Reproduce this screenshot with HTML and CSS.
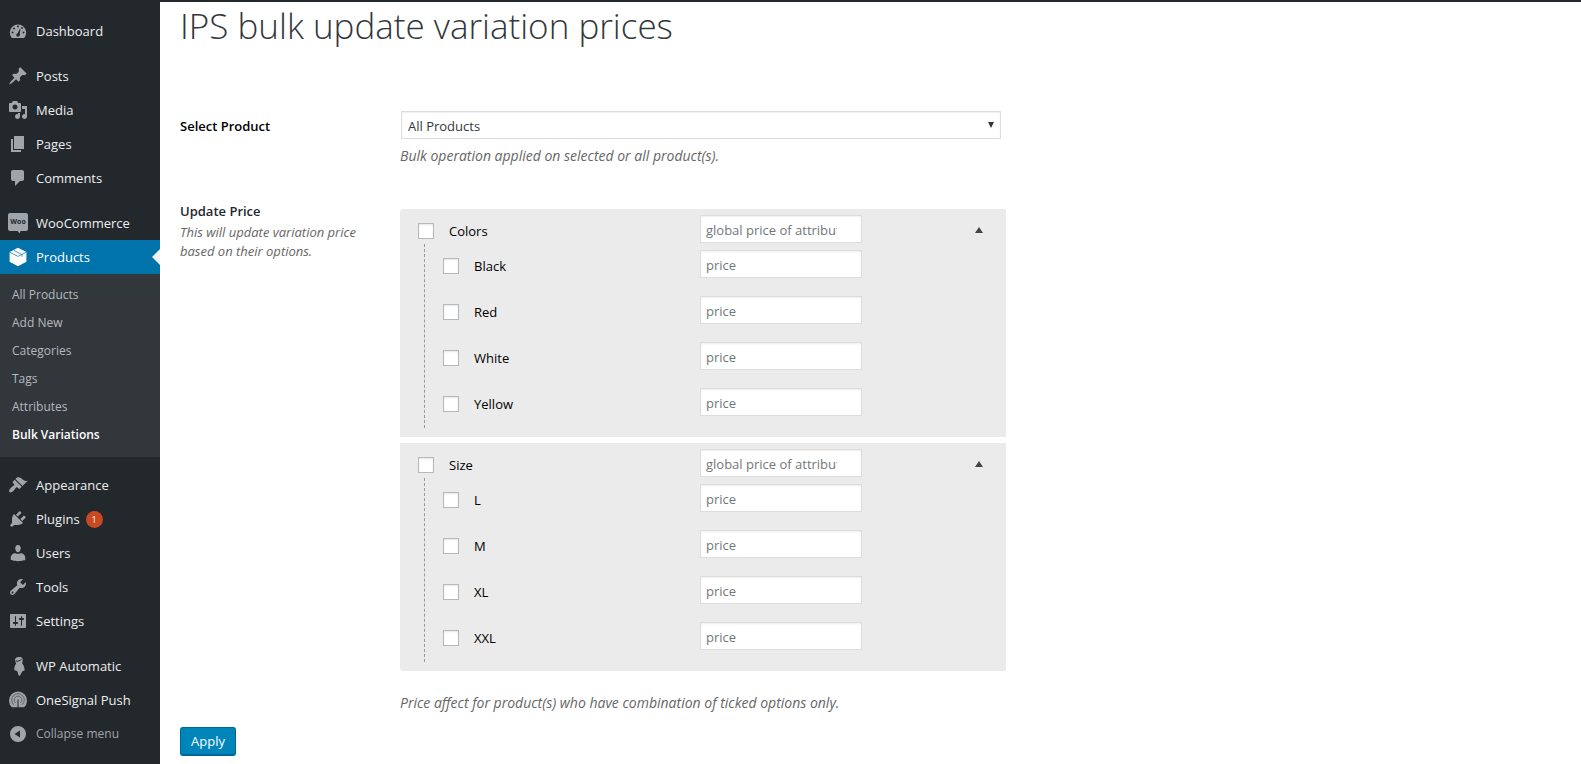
FILE: index.html
```html
<!DOCTYPE html>
<html lang="en">
<head>
<meta charset="utf-8">
<title>IPS bulk update variation prices</title>
<link rel="stylesheet" href="styles.css">
</head>
<body>
<div class="toolbar"></div>
<div class="layout">
  <nav class="menu" aria-label="Main menu">
    <ul class="menu-list">
      <li><a class="menu-item" href="#"><svg class="icon" viewBox="0 0 20 20"><path d="M3.760 17h12.480A8.200 8.200 0 1 0 3.760 17z"/><g class="icon-dots"><circle cx="10" cy="5.500" r="1"/><circle cx="6" cy="7.500" r="1"/><circle cx="14" cy="7" r="1"/><circle cx="4.500" cy="11.500" r="1"/><circle cx="15.500" cy="11.500" r="1"/><circle cx="10" cy="14" r="1.800"/><path d="M9.300 13L11.800 8l.7.300-1 5.700z"/></g></svg>Dashboard</a></li>
      <li class="spaced"><a class="menu-item" href="#"><svg class="icon" viewBox="0 0 20 20"><path d="M10.440 3.020l1.820-1.820 6.360 6.350-1.830 1.820c-1.050-.68-2.480-.57-3.410.36l-.75.75c-.92.93-1.040 2.350-.35 3.410l-1.830 1.820-2.410-2.410-2.800 2.790c-.42.42-3.380 2.710-3.800 2.290s1.860-3.390 2.280-3.810l2.790-2.790L4.100 9.360l1.830-1.820c1.050.69 2.480.57 3.400-.36l.75-.75c.93-.92 1.050-2.350.36-3.410z"/></svg>Posts</a></li>
      <li><a class="menu-item" href="#"><svg class="icon" viewBox="0 0 20 20"><path fill-rule="evenodd" d="M13 11V4c0-.55-.45-1-1-1h-1.670L9 1H5L3.670 3H2c-.55 0-1 .45-1 1v7c0 .55.45 1 1 1h10c.55 0 1-.45 1-1zM7 4.500c1.380 0 2.500 1.120 2.500 2.500S8.380 9.500 7 9.500 4.500 8.380 4.500 7 5.620 4.500 7 4.500zM14 6h5v10.500c0 1.380-1.120 2.500-2.500 2.500S14 17.880 14 16.500s1.120-2.500 2.500-2.500c.17 0 .34.02.5.05V9h-3V6zm-4 8.050V13h2v3.500c0 1.380-1.120 2.500-2.500 2.500S7 17.880 7 16.500 8.120 14 9.500 14c.17 0 .34.02.5.05z"/></svg>Media</a></li>
      <li><a class="menu-item" href="#"><svg class="icon" viewBox="0 0 20 20"><path d="M6 15V2h10v13H6zm-1 1h8v2H3V5h2v11z"/></svg>Pages</a></li>
      <li><a class="menu-item" href="#"><svg class="icon" viewBox="0 0 20 20"><path d="M5 2h9c1.100 0 2 .9 2 2v7c0 1.100-.9 2-2 2h-2l-5 5v-5H5c-1.100 0-2-.9-2-2V4c0-1.100.9-2 2-2z"/></svg>Comments</a></li>
      <li class="spaced"><a class="menu-item" href="#"><svg class="icon" viewBox="0 0 20 20"><path d="M2 0h16a2 2 0 0 1 2 2v14a2 2 0 0 1-2 2h-5.500l-.7 2.400L9.500 18H2a2 2 0 0 1-2-2V2a2 2 0 0 1 2-2z"/><text class="icon-word" x="10" y="11" text-anchor="middle">Woo</text></svg>WooCommerce</a></li>
      <li>
        <a class="menu-item current" href="#"><svg class="icon" viewBox="0 0 20 20"><path d="M10 .8l8.400 4.200v9.800L10 19.200l-8.400-4.400V5z"/><path class="icon-line" d="M1.600 5.200L10 9.400l8.400-4.200M5.600 3.200L14 7.600v2.200"/></svg>Products</a>
        <ul class="submenu">
          <li><a href="#">All Products</a></li>
          <li><a href="#">Add New</a></li>
          <li><a href="#">Categories</a></li>
          <li><a href="#">Tags</a></li>
          <li><a href="#">Attributes</a></li>
          <li><a class="active" href="#">Bulk Variations</a></li>
        </ul>
      </li>
      <li class="spaced"><a class="menu-item" href="#"><svg class="icon" viewBox="0 0 20 20"><path d="M14.480 11.060L7.410 3.990l1.500-1.500c.5-.56 2.300-.47 3.510.32 1.210.8 1.430 1.280 2.910 2.100 1.180.64 2.450 1.260 4.450.85zm-.71.71L6.700 4.700 4.930 6.470c-.39.39-.39 1.020 0 1.410l1.060 1.060c.39.39.39 1.030 0 1.420-.6.6-1.430 1.110-2.210 1.690-.35.26-.7.53-1.010.84C1.430 14.230.4 16.080 1.400 17.070c.99 1 2.840-.03 4.180-1.360.31-.31.58-.66.85-1.020.57-.78 1.080-1.610 1.690-2.210.39-.39 1.020-.39 1.410 0l1.060 1.060c.39.39 1.020.39 1.410 0z"/></svg>Appearance</a></li>
      <li><a class="menu-item" href="#"><svg class="icon" viewBox="0 0 20 20"><path d="M13.110 4.360L9.870 7.600 8 5.730l3.240-3.240c.35-.34 1.050-.2 1.560.32.52.51.66 1.210.31 1.550zm-8 1.770l.91-1.120 9.010 9.010-1.190.84c-.71.71-2.630 1.160-3.820 1.160H6.140L4.900 17.260c-.59.59-1.540.59-2.120 0-.59-.58-.59-1.530 0-2.120l1.240-1.240v-3.880c0-1.130.4-3.190 1.090-3.890zm7.260 3.970l3.240-3.240c.34-.35 1.040-.21 1.550.31.52.51.66 1.210.31 1.550l-3.240 3.250z"/></svg>Plugins<span class="badge">1</span></a></li>
      <li><a class="menu-item" href="#"><svg class="icon" viewBox="0 0 20 20"><path d="M10 9.250c-2.270 0-2.730-3.440-2.730-3.440C7 4.020 7.820 2 9.970 2c2.160 0 2.980 2.020 2.710 3.810 0 0-.41 3.440-2.680 3.440zM7.400 10.200c1.500.8 3.700.8 5.200 0 2.500 0 4.640 2.100 4.640 4.330v2.490s-3.650 1.130-7.240 1.130c-3.650 0-7.240-1.130-7.240-1.130v-2.490c0-2.250 2.140-4.330 4.640-4.330z"/></svg>Users</a></li>
      <li><a class="menu-item" href="#"><svg class="icon" viewBox="0 0 20 20"><path fill-rule="evenodd" d="M16.680 9.770c-1.340 1.340-3.300 1.670-4.950.99l-5.410 6.520c-.99.99-2.590.99-3.580 0s-.99-2.590 0-3.570l6.520-5.420c-.68-1.650-.35-3.610.99-4.950 1.280-1.280 3.120-1.620 4.720-1.060l-2.890 2.890 2.820 2.820 2.860-2.870c.53 1.580.18 3.390-1.080 4.650zM3.810 16.210c.4.39 1.040.39 1.430 0 .4-.4.4-1.040 0-1.430-.39-.4-1.030-.4-1.430 0-.39.39-.39 1.030 0 1.430z"/></svg>Tools</a></li>
      <li><a class="menu-item" href="#"><svg class="icon" viewBox="0 0 20 20"><path fill-rule="evenodd" d="M18 16V4c0-.55-.45-1-1-1H3c-.55 0-1 .45-1 1v12c0 .55.45 1 1 1h14c.55 0 1-.45 1-1zM8 11h1c.55 0 1 .45 1 1s-.45 1-1 1H8v1.500c0 .28-.22.5-.5.5s-.5-.22-.5-.5V13H6c-.55 0-1-.45-1-1s.45-1 1-1h1V5.500c0-.28.22-.5.5-.5s.5.22.5.5V11zm5-2h-1c-.55 0-1-.45-1-1s.45-1 1-1h1V5.500c0-.28.22-.5.5-.5s.5.22.5.5V7h1c.55 0 1 .45 1 1s-.45 1-1 1h-1v5.500c0 .28-.22.5-.5.5s-.5-.22-.5-.5V9z"/></svg>Settings</a></li>
      <li class="spaced"><a class="menu-item" href="#"><svg class="icon" viewBox="0 0 20 20"><path d="M11.500 1C14.500 1 15 3 14.600 5l-.4 2.500c1.600 2 2.600 4.500 2.400 7l-1.800.5-1.200 1.500-1.600 3.300h-1.200l-1.200-3.800-1-1.200-2.200-.6c-.3-2.500.4-4.800 1.800-6.700L7 5C6.500 2.500 8.500 1 11.500 1z"/><path class="icon-cut" d="M7.500 4.800c2 1.200 4.800-.2 6.200-1.800"/></svg>WP Automatic</a></li>
      <li><a class="menu-item" href="#"><svg class="icon" viewBox="0 0 20 20"><path d="M4 17.300A9 9 0 1 1 16 17.300z"/><path class="icon-ring" d="M6 14.800a6.300 6.300 0 1 1 8 0M7.500 12.800a3.800 3.800 0 1 1 5 0"/><path class="icon-cut" d="M10 9.500v8.500"/></svg>OneSignal Push</a></li>
      <li><button class="menu-item collapse" type="button"><svg class="icon" viewBox="0 0 20 20"><path fill-rule="evenodd" d="M10 2a8 8 0 1 1 0 16 8 8 0 0 1 0-16zM12 6.500L6.500 10l5.500 3.500z"/></svg>Collapse menu</button></li>
    </ul>
  </nav>
  <main class="content">
    <h1>IPS bulk update variation prices</h1>
    <form>
      <div class="field">
        <label class="field-name" for="product">Select Product</label>
        <div class="field-body">
          <div class="select-box">
            <select id="product"><option>All Products</option></select>
            <svg class="select-arrow" viewBox="0 0 6 6"><path d="M0 0h6L3 6z"/></svg>
          </div>
          <p class="hint">Bulk operation applied on selected or all product(s).</p>
        </div>
      </div>
      <div class="field">
        <div>
          <h2 class="field-name">Update Price</h2>
          <p class="hint narrow">This will update variation price based on their options.</p>
        </div>
        <div class="field-body groups">
          <section class="group first">
            <div class="row head">
              <label><input type="checkbox">Colors</label>
              <input type="text" placeholder="global price of attribute" aria-label="Colors price">
              <button class="toggle" type="button" aria-label="Collapse Colors"><svg viewBox="0 0 8 6"><path d="M4 0l4 6H0z"/></svg></button>
            </div>
            <div class="options">
              <div class="row"><label><input type="checkbox">Black</label><input type="text" placeholder="price" aria-label="Black price"></div>
              <div class="row"><label><input type="checkbox">Red</label><input type="text" placeholder="price" aria-label="Red price"></div>
              <div class="row"><label><input type="checkbox">White</label><input type="text" placeholder="price" aria-label="White price"></div>
              <div class="row"><label><input type="checkbox">Yellow</label><input type="text" placeholder="price" aria-label="Yellow price"></div>
            </div>
          </section>
          <section class="group last">
            <div class="row head">
              <label><input type="checkbox">Size</label>
              <input type="text" placeholder="global price of attribute" aria-label="Size price">
              <button class="toggle" type="button" aria-label="Collapse Size"><svg viewBox="0 0 8 6"><path d="M4 0l4 6H0z"/></svg></button>
            </div>
            <div class="options">
              <div class="row"><label><input type="checkbox">L</label><input type="text" placeholder="price" aria-label="L price"></div>
              <div class="row"><label><input type="checkbox">M</label><input type="text" placeholder="price" aria-label="M price"></div>
              <div class="row"><label><input type="checkbox">XL</label><input type="text" placeholder="price" aria-label="XL price"></div>
              <div class="row"><label><input type="checkbox">XXL</label><input type="text" placeholder="price" aria-label="XXL price"></div>
            </div>
          </section>
          <p class="hint after">Price affect for product(s) who have combination of ticked options only.</p>
        </div>
      </div>
      <button class="apply" type="submit">Apply</button>
    </form>
  </main>
</div>
</body>
</html>
```
FILE: styles.css
```css
* {
  box-sizing: border-box;
}

body {
  margin: 0;
  min-height: 100vh;
  display: flex;
  flex-direction: column;
  background: #fff;
  color: #000;
  font: 13px/20px "Open Sans", "Noto Sans", sans-serif;
}

h1, h2, p, ul {
  margin: 0;
  padding: 0;
}

button, input, select {
  font: inherit;
}

.toolbar {
  height: 2px;
  background: #23282d;
}

.layout {
  display: grid;
  grid-template-columns: 160px minmax(0, 1fr);
  flex: 1;
}

/* Side menu */
.menu {
  padding-top: 12px;
  background: #23282d;
}

.menu ul {
  list-style: none;
}

.spaced {
  margin-top: 11px;
}

.menu-item {
  position: relative;
  display: flex;
  align-items: center;
  width: 100%;
  height: 34px;
  padding: 0 8px;
  border: 0;
  background: none;
  color: #eee;
  text-decoration: none;
}

.icon {
  width: 20px;
  height: 20px;
  margin-right: 8px;
  fill: #a0a5aa;
  overflow: visible;
}

.icon-word {
  font-size: 7px;
  font-weight: 700;
  fill: #23282d;
}

.icon-dots {
  fill: #23282d;
}

.icon-line {
  fill: none;
  stroke: #0073aa;
  stroke-opacity: 0.7;
}

.icon-cut {
  fill: none;
  stroke: #23282d;
}

.icon-ring {
  fill: none;
  stroke: #5d6369;
}

.current {
  background: #0073aa;
  color: #fff;
}

.current .icon {
  fill: #fff;
}

.current::after {
  content: "";
  position: absolute;
  top: 9px;
  right: 0;
  border: 8px solid transparent;
  border-left: 0;
  border-right-color: #f1f1f1;
}

.submenu {
  padding: 7px 0 8px;
  background: #32373c;
}

.submenu a {
  display: block;
  padding: 4px 12px;
  color: #b4b9be;
  font-size: 12px;
  text-decoration: none;
}

.submenu .active {
  color: #fff;
  font-weight: 600;
}

.badge {
  width: 17px;
  height: 17px;
  margin-left: 6px;
  border-radius: 50%;
  background: #ca4a1f;
  color: #fff;
  font-size: 9px;
  line-height: 17px;
  text-align: center;
}

.collapse {
  color: #a0a5aa;
  font-size: 12px;
}

/* Page content */
.content {
  padding: 0 20px;
}

h1 {
  padding-bottom: 61px;
  color: #32373c;
  font-size: 35px;
  font-weight: 300;
  line-height: 48px;
}

.field {
  display: grid;
  grid-template-columns: 220px minmax(0, 606px);
}

.field-name {
  padding-top: 5px;
  color: #000;
  font-size: 13px;
  font-weight: 600;
  line-height: 20px;
}

h2.field-name {
  padding-top: 0;
  color: #23282d;
}

.select-box {
  position: relative;
  margin: 0 5px 0 1px;
}

select, input[type="text"] {
  height: 28px;
  border: 1px solid #ddd;
  border-radius: 0;
  background: #fff;
  box-shadow: inset 0 1px 2px rgba(0, 0, 0, 0.07);
  color: #32373c;
}

select {
  appearance: none;
  width: 100%;
  padding: 1px 24px 0 6px;
}

.select-arrow {
  position: absolute;
  top: 11px;
  right: 7px;
  width: 6px;
  height: 6px;
  fill: #32373c;
  pointer-events: none;
}

.hint {
  color: #666;
  font-style: italic;
  line-height: 19px;
}

.field-body .hint {
  padding-top: 7px;
  font-size: 14px;
}

.narrow {
  width: 180px;
  padding-top: 2px;
}

.field + .field {
  padding-top: 36px;
}

.groups {
  display: grid;
  gap: 6px;
  padding-top: 8px;
}

.group {
  padding: 6px 0 9px;
  background: #ebebeb;
}

.first {
  border-radius: 3px 3px 0 0;
}

.last {
  border-radius: 0 0 3px 3px;
}

.row {
  display: grid;
  grid-template-columns: 257px 162px;
  padding: 6px 0 12px;
}

.head {
  grid-template-columns: 282px 162px 1fr;
  padding: 0 23px 1px 18px;
}

.options {
  margin-left: 24px;
  padding-left: 18px;
  border-left: 1px dashed #999;
}

.row label {
  display: flex;
  align-items: center;
  gap: 15px;
  height: 28px;
  padding-top: 4px;
}

input[type="checkbox"] {
  appearance: none;
  width: 16px;
  height: 16px;
  margin: 0;
  border: 1px solid #b4b9be;
  background: #fff;
  box-shadow: inset 0 1px 2px rgba(0, 0, 0, 0.1);
}

input[type="text"] {
  width: 100%;
  padding: 2px 24px 0 5px;
}

input::placeholder {
  color: #72777c;
  opacity: 1;
}

.toggle {
  display: flex;
  align-items: center;
  justify-self: end;
  padding: 2px 0 0;
  border: 0;
  background: none;
}

.toggle svg {
  width: 8px;
  height: 6px;
  fill: #444;
}

.field-body .after {
  padding-top: 16px;
}

.apply {
  height: 29px;
  margin-top: 15px;
  padding: 0 10px;
  border: 1px solid #006799;
  border-bottom-width: 2px;
  border-radius: 3px;
  background: #0085ba;
  color: #fff;
}
```
